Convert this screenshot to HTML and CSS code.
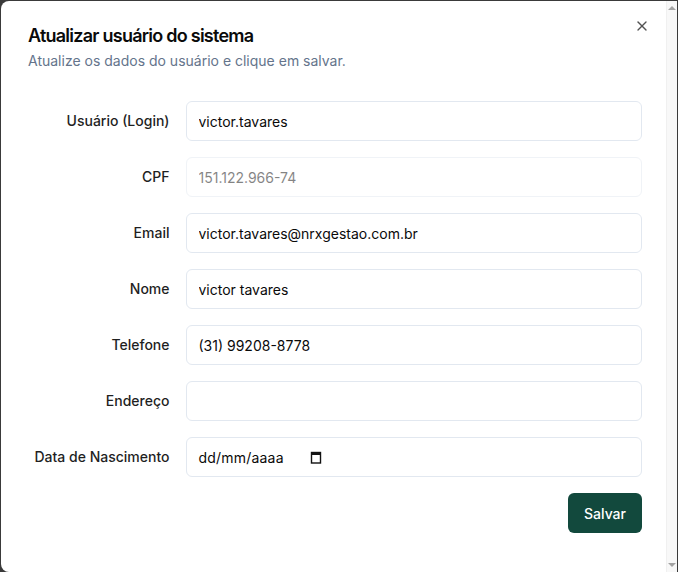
FILE: index.html
```html
<!DOCTYPE html>
<html lang="pt-BR">
<head>
<meta charset="utf-8">
<title>Atualizar usuário do sistema</title>
<link rel="stylesheet" href="styles.css">
</head>
<body>
<div class="dialog">
  <div class="dialog-content">
    <button class="close" aria-label="Fechar">
      <svg width="16" height="16" viewBox="0 0 24 24" fill="none" stroke="currentColor" stroke-width="2" stroke-linecap="round" stroke-linejoin="round"><path d="M18 6 6 18"/><path d="m6 6 12 12"/></svg>
    </button>
    <header class="dialog-header">
      <h2 class="dialog-title">Atualizar usuário do sistema</h2>
      <p class="dialog-desc">Atualize os dados do usuário e clique em salvar.</p>
    </header>
    <form class="form">
      <div class="grid">
        <label class="label" for="login">Usuário (Login)</label>
        <input class="input" id="login" type="text" value="victor.tavares">
        <label class="label" for="cpf">CPF</label>
        <input class="input" id="cpf" type="text" value="151.122.966-74" disabled>
        <label class="label" for="email">Email</label>
        <input class="input" id="email" type="text" value="victor.tavares@nrxgestao.com.br">
        <label class="label" for="nome">Nome</label>
        <input class="input" id="nome" type="text" value="victor tavares">
        <label class="label" for="tel">Telefone</label>
        <input class="input" id="tel" type="text" value="(31) 99208-8778">
        <label class="label" for="end">Endereço</label>
        <input class="input" id="end" type="text" value="">
        <label class="label">Data de Nascimento</label>
        <div class="input date-input">
          <span class="date-text">dd/mm/aaaa</span>
          <svg class="cal-icon" width="12" height="13" viewBox="0 0 12 13"><rect x="1.5" y="1.5" width="9" height="10.5" fill="none" stroke="#111" stroke-width="1.4"/><rect x="1" y="1" width="10" height="3" fill="#111"/></svg>
        </div>
      </div>
      <div class="footer">
        <button type="button" class="btn">Salvar</button>
      </div>
    </form>
  </div>
  <div class="scrollbar">
    <span class="arrow up"></span>
    <span class="arrow down"></span>
  </div>
</div>
</body>
</html>
```

FILE: styles.css
```css
* { box-sizing: border-box; }

html, body {
  margin: 0;
  height: 100%;
}

body {
  background: #3a3a3a;
  padding: 1px 1px 0 1px;
  font-family: Inter, "Noto Sans", sans-serif;
  color: #0a0a0a;
}

.dialog {
  display: flex;
  height: 571px;
  background: #ffffff;
  border-radius: 8px 0 0 8px;
  overflow: hidden;
}

.dialog-content {
  position: relative;
  flex: 1;
  padding: 26px 24px 24px 27px;
}

.close {
  position: absolute;
  top: 17px;
  right: 16px;
  width: 16px;
  height: 16px;
  padding: 0;
  border: 0;
  background: none;
  color: #0a0a0a;
  opacity: 0.7;
  display: flex;
}

.dialog-header {
  display: flex;
  flex-direction: column;
  gap: 6px;
}

.dialog-title {
  margin: 0;
  font-size: 18px;
  line-height: 18px;
  font-weight: 600;
  letter-spacing: -0.75px;
}

.dialog-desc {
  margin: 0;
  font-size: 14px;
  line-height: 20px;
  color: #64748b;
}

.form {
  padding-top: 14px;
}

.grid {
  display: grid;
  grid-template-columns: repeat(4, 1fr);
  gap: 16px;
  align-items: center;
  padding: 16px 0;
}

.label {
  font-size: 14px;
  font-weight: 500;
  line-height: 1;
  text-align: right;
  color: #1f1f1f;
}

.input {
  grid-column: span 3;
  height: 40px;
  width: 100%;
  border: 1px solid #e2e8f0;
  border-radius: 6px;
  padding: 0 12px;
  font-family: inherit;
  font-size: 14px;
  color: #0a0a0a;
  background: #fff;
  outline: none;
}

.input:disabled {
  opacity: 0.5;
}

.date-input {
  display: flex;
  align-items: center;
}

.date-text {
  letter-spacing: 0.2px;
}

.cal-icon {
  margin-left: 26px;
}

.footer {
  display: flex;
  justify-content: flex-end;
}

.btn {
  height: 40px;
  padding: 0 16px;
  border: 0;
  border-radius: 6px;
  background: #12493d;
  color: #fff;
  font-family: inherit;
  font-size: 14px;
  font-weight: 500;
}

.scrollbar {
  position: relative;
  width: 11px;
  background: #f8f8f8;
  border-left: 1px solid #f0f0f0;
}

.arrow {
  position: absolute;
  left: 1px;
  width: 0;
  height: 0;
  border-left: 4px solid transparent;
  border-right: 4px solid transparent;
}

.arrow.up {
  top: 5px;
  border-bottom: 4px solid #a3a3a3;
}

.arrow.down {
  bottom: 5px;
  border-top: 4px solid #a3a3a3;
}
```
